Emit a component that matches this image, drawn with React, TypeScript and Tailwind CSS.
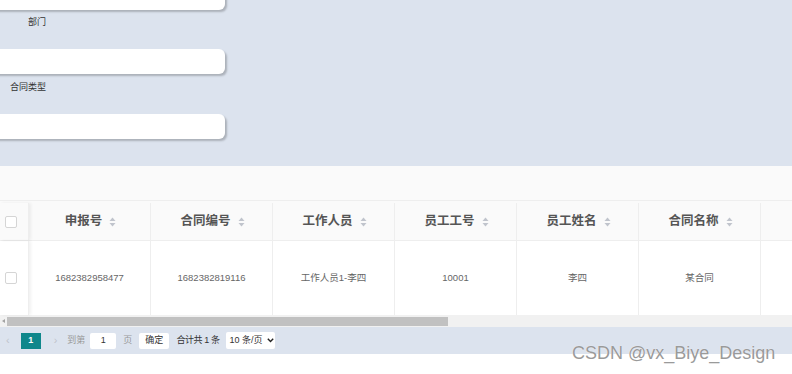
import React from 'react';

const font = { fontFamily: '"Liberation Sans", "Noto Sans CJK SC", sans-serif' };

const columns = ['申报号', '合同编号', '工作人员', '员工工号', '员工姓名', '合同名称'];
const row = ['1682382958477', '1682382819116', '工作人员1-李四', '10001', '李四', '某合同'];

const SortIcon = () => (
  <svg width="7" height="10" viewBox="0 0 7 10" className="ml-[7px] shrink-0">
    <path d="M3.5 0.5 L6.5 4 L0.5 4 Z" fill="#c0c4cc" />
    <path d="M3.5 9.5 L6.5 6 L0.5 6 Z" fill="#c0c4cc" />
  </svg>
);

const Checkbox = () => (
  <div className="w-[12px] h-[12px] rounded-[2px] border border-[#d5d5d5] bg-white" />
);

const FormInput = ({ className = '' }: { className?: string }) => (
  <div
    className={`h-[25px] w-[245px] -ml-[20px] rounded-[6px] bg-white shadow-[2px_2px_2px_rgba(0,0,0,0.22)] ${className}`}
  />
);

export default function App() {
  return (
    <div className="relative w-[792px] h-[374px] overflow-hidden bg-white" style={font}>
      {/* search form */}
      <div className="h-[166px] bg-[#dce3ee] pt-px">
        <FormInput className="-mt-[16px]" />
        <div className="mt-[7px] w-[46px] text-right text-[9px] leading-[10px] text-[#333]">部门</div>
        <FormInput className="mt-[22px]" />
        <div className="mt-[8px] w-[46px] text-right text-[9px] leading-[10px] text-[#333]">合同类型</div>
        <FormInput className="mt-[22px]" />
      </div>

      {/* toolbar strip */}
      <div className="h-[34px] bg-[#fafafa]" />

      {/* table */}
      <div className="flex h-[41px] pt-[2px] bg-[#fafafa] border-t border-b border-[#eeeeee]">
        <div className="w-[29px] shrink-0 flex items-center pl-[5px] shadow-[2px_0_3px_rgba(0,0,0,0.06)] border-r border-[#eeeeee]">
          <Checkbox />
        </div>
        {columns.map((c) => (
          <div
            key={c}
            className="w-[122px] shrink-0 flex items-center justify-center pl-[2px] border-r border-[#eeeeee] text-[12.5px] font-bold text-[#555]"
          >
            {c}
            <SortIcon />
          </div>
        ))}
        <div className="flex-1" />
      </div>
      <div className="flex h-[74px] bg-white">
        <div className="w-[29px] shrink-0 flex items-center pl-[5px] shadow-[2px_0_3px_rgba(0,0,0,0.06)] border-r border-[#eeeeee]">
          <Checkbox />
        </div>
        {row.map((v, i) => (
          <div
            key={i}
            className="w-[122px] shrink-0 flex items-center justify-center border-r border-[#eeeeee] text-[9.5px] text-[#666]"
          >
            {v}
          </div>
        ))}
        <div className="flex-1" />
      </div>

      {/* horizontal scrollbar */}
      <div className="flex items-center h-[12px] bg-[#f1f1f1]">
        <div className="w-[7px] flex justify-center">
          <svg width="3" height="4" viewBox="0 0 3 4">
            <path d="M3 0 L0 2 L3 4 Z" fill="#a3a3a3" />
          </svg>
        </div>
        <div className="h-[9px] w-[441px] bg-[#c1c1c1]" />
      </div>

      {/* pagination */}
      <div className="flex items-center h-[27px] bg-[#dce3ee] text-[9px] text-[#606266]">
        <span className="ml-[6px] text-[#c0c4cc] text-[11px]">‹</span>
        <div className="ml-[11px] w-[20px] h-[16px] bg-[#0f878b] text-white font-bold flex items-center justify-center">1</div>
        <span className="ml-[13px] text-[#c0c4cc] text-[11px]">›</span>
        <span className="ml-[10px] text-[#999]">到第</span>
        <div className="ml-[5px] w-[26px] h-[16px] bg-white rounded-[2px] flex items-center justify-center text-[#333]">1</div>
        <span className="ml-[7px] text-[#999]">页</span>
        <div className="ml-[7px] w-[30px] h-[16px] bg-white rounded-[2px] flex items-center justify-center text-[#333]">确定</div>
        <span className="ml-[7px] text-[#333] tracking-[-0.4px]">合计共 1 条</span>
        <div className="ml-[6px] w-[49px] h-[17px] bg-white rounded-[2px] flex items-center pl-[4px] gap-[4px] text-[#333]">
          10 条/页
          <svg width="7" height="5" viewBox="0 0 7 5">
            <path d="M0.8 0.8 L3.5 3.6 L6.2 0.8" stroke="#222" strokeWidth="1.4" fill="none" />
          </svg>
        </div>
      </div>

      {/* watermark */}
      <div className="absolute left-[572px] top-[343px] text-[18px] text-[#9a9a9a] leading-[20px] [text-shadow:0_0_1px_#fff]">
        CSDN @vx_Biye_Design
      </div>
    </div>
  );
}
